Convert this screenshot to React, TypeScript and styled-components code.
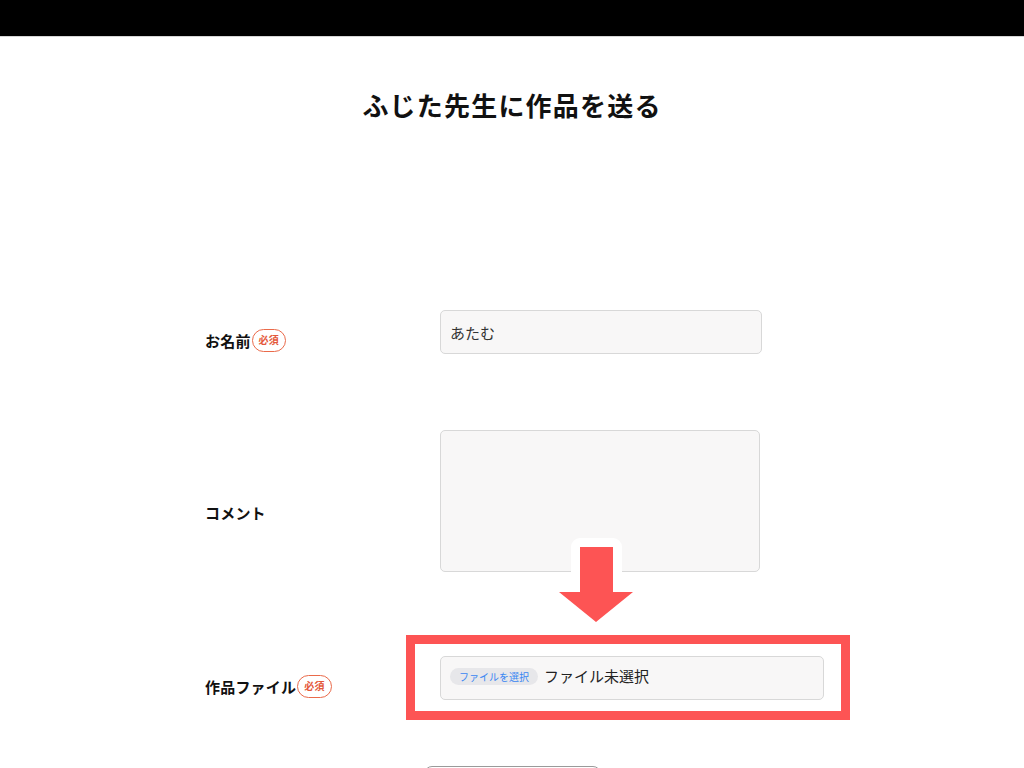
import React from "react";
import styled, { createGlobalStyle } from "styled-components";

const Global = createGlobalStyle`
  html, body { margin: 0; padding: 0; background: #fff; }
  body {
    font-family: "Noto Sans CJK JP", "Noto Sans", sans-serif;
    color: #111;
  }
  * { box-sizing: border-box; }
`;

const TopBar = styled.header`
  height: 37px;
  background: #000;
  border-bottom: 1px solid #d6d6d6;
`;

const Title = styled.h1`
  margin: 48px 0 0;
  font-size: 26px;
  line-height: 39px;
  font-weight: 700;
  letter-spacing: 1.2px;
  text-align: center;
  color: #111;
`;

const Form = styled.form`
  width: 614px;
  margin: 186px auto 0;
  display: flex;
  flex-direction: column;
`;

const Row = styled.div<{ $gap?: number }>`
  display: grid;
  grid-template-columns: 235px 1fr;
  align-items: center;
  margin-top: ${(p) => p.$gap ?? 0}px;
`;

const Label = styled.label<{ $shift?: number }>`
  display: flex;
  align-items: center;
  padding-top: ${(p) => (p.$shift ?? 8) * 2}px;
  font-size: 15px;
  font-weight: 700;
  letter-spacing: 0.2px;
  color: #111;
`;

const Required = styled.span`
  display: inline-flex;
  align-items: center;
  justify-content: center;
  height: 23px;
  padding: 0 6px;
  margin-left: 1px;
  border: 1px solid #ea6a4a;
  border-radius: 12px;
  font-size: 10px;
  font-weight: 700;
  color: #e4583a;
  line-height: 1;
`;

const TextInput = styled.input`
  width: 322px;
  height: 44px;
  padding: 0 9px;
  background: #f8f7f7;
  border: 1px solid #d8d8d8;
  border-radius: 5px;
  font-family: inherit;
  font-size: 15px;
  color: #333;
  outline: none;
`;

const TextArea = styled.textarea`
  display: block;
  width: 320px;
  height: 142px;
  padding: 9px;
  background: #f8f7f7;
  border: 1px solid #d8d8d8;
  border-radius: 5px;
  font-family: inherit;
  font-size: 15px;
  resize: none;
  outline: none;
`;

const FileField = styled.div`
  position: relative;
  width: 384px;
  height: 44px;
  display: flex;
  align-items: center;
  gap: 6px;
  padding: 0 9px;
  background: #f8f7f7;
  border: 1px solid #d8d8d8;
  border-radius: 5px;
`;

const FilePill = styled.span`
  display: inline-flex;
  align-items: center;
  height: 17px;
  padding: 0 9px;
  margin-top: -4px;
  border-radius: 9px;
  background: #e7e7ea;
  font-size: 10px;
  color: #3a86f2;
`;

const FileStatus = styled.span`
  font-size: 15px;
  color: #222;
  margin-top: -6px;
`;

const Highlight = styled.div`
  position: absolute;
  left: -35px;
  top: -22px;
  right: -27px;
  bottom: -21px;
  border: 9px solid #fd5454;
  pointer-events: none;
`;

const ArrowMark = styled.svg`
  position: absolute;
  left: 110px;
  top: -127px;
  width: 90px;
  height: 100px;
  pointer-events: none;
`;

const SubmitRow = styled.div`
  display: flex;
  justify-content: center;
  margin-top: 66px;
  padding-bottom: 40px;
`;

const Submit = styled.button`
  width: 177px;
  height: 60px;
  padding: 24px 0 0;
  border: 1px solid #9a9a9a;
  border-radius: 8px;
  background: #fff;
  font-family: inherit;
  font-size: 15px;
  font-weight: 700;
  line-height: 20px;
`;

const arrowPoints = "29,17 62,17 62,62 82,62 45,92 8,62 29,62";

export default function App() {
  return (
    <>
      <Global />
      <TopBar />
      <Title>ふじた先生に作品を送る</Title>
      <Form onSubmit={(e) => e.preventDefault()}>
        <Row>
          <Label>
            お名前<Required>必須</Required>
          </Label>
          <TextInput defaultValue="あたむ" />
        </Row>
        <Row $gap={76}>
          <Label $shift={11}>コメント</Label>
          <TextArea />
        </Row>
        <Row $gap={84}>
          <Label>
            作品ファイル<Required>必須</Required>
          </Label>
          <FileField>
            <FilePill>ファイルを選択</FilePill>
            <FileStatus>ファイル未選択</FileStatus>
            <Highlight />
            <ArrowMark viewBox="0 0 90 100">
              <polygon
                points={arrowPoints}
                fill="#fff"
                stroke="#fff"
                strokeWidth={18}
                strokeLinejoin="round"
              />
              <polygon points={arrowPoints} fill="#fd5454" />
            </ArrowMark>
          </FileField>
        </Row>
        <SubmitRow>
          <Submit type="submit">送信する</Submit>
        </SubmitRow>
      </Form>
    </>
  );
}
